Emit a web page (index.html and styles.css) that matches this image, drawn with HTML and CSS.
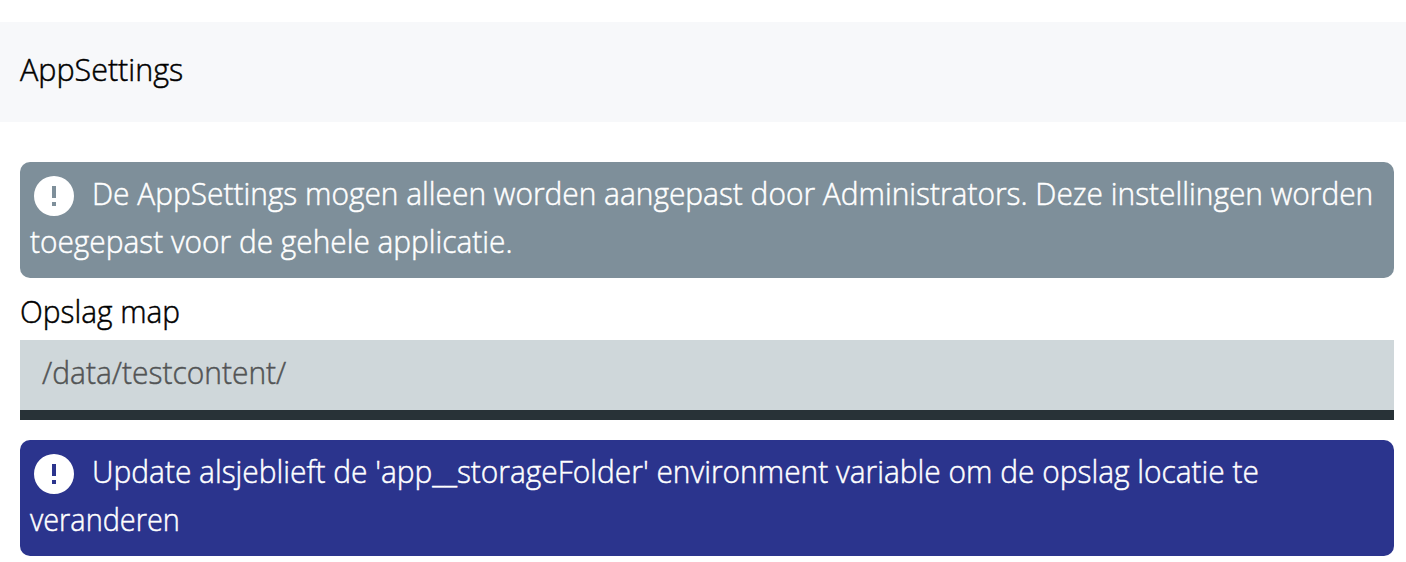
FILE: index.html
```html
<!DOCTYPE html>
<html lang="nl">
<head>
<meta charset="utf-8">
<title>AppSettings</title>
<link rel="stylesheet" href="styles.css">
</head>
<body>
<header class="header"><h1 class="title"><span class="text title-text">AppSettings</span></h1></header>
<main class="content">
<div class="alert alert-info"><svg class="icon" viewBox="0 0 40 40"><path fill="#fff" fill-rule="evenodd" d="M20 0a20 20 0 1 0 0 40a20 20 0 1 0 0-40zM18 10h4v12h-4zM18 26h4v4h-4z"/></svg><span class="text info-first">De AppSettings mogen alleen worden aangepast door Administrators. Deze instellingen worden</span><br><span class="text info-last">toegepast voor de gehele applicatie.</span></div>
<h2 class="label"><span class="text label-text">Opslag map</span></h2>
<div class="field"><span class="text field-text">/data/testcontent/</span></div>
<div class="alert alert-warning"><svg class="icon" viewBox="0 0 40 40"><path fill="#fff" fill-rule="evenodd" d="M20 0a20 20 0 1 0 0 40a20 20 0 1 0 0-40zM18 10h4v12h-4zM18 26h4v4h-4z"/></svg><span class="text warning-first">Update alsjeblieft de 'app__storageFolder' environment variable om de opslag locatie te</span><br><span class="text warning-last">veranderen</span></div>
</main>
</body>
</html>
```
FILE: styles.css
```css
* { box-sizing: border-box; }
body { margin: 0; padding-top: 22px; background: #fff; color: #000; font: 300 32px/48px "Open Sans", "Noto Sans", sans-serif; }
.header { height: 100px; padding: 24px 20px; background: #f7f8fa; }
.title, .label { margin: 0; font-size: 32px; font-weight: 300; line-height: 48px; }
.content { padding: 40px 12px 0 20px; }
.alert { height: 116px; padding: 8px 10px; border-radius: 10px; color: #fff; white-space: nowrap; }
.alert-info { background: #7e8f9a; }
.alert-warning { margin-top: 20px; background: #2b348d; }
.icon { width: 40px; height: 40px; margin: 0 18px 0 4px; vertical-align: -10px; }
.label { height: 62px; padding-top: 10px; }
.field { height: 80px; padding: 9px 22px; background: #cfd7da; border-bottom: 10px solid #283237; color: #525455; }
/* Condensed light lettering */
.text { display: inline-block; transform-origin: 0 50%; -webkit-text-stroke: 0.5px currentColor; }
.title-text { transform: translateY(-1px) scaleX(0.952); }
.info-first { transform: translateY(-1px) scaleX(0.9335); }
.info-last { transform: translateY(-1px) scaleX(0.932); }
.label-text { transform: translateY(-1px) scaleX(0.932); }
.field-text { transform: translateY(-1px) scaleX(0.936); }
.warning-first { transform: translateY(-1px) scaleX(0.934); }
.warning-last { transform: translateY(-1px) scaleX(0.902); }
```
